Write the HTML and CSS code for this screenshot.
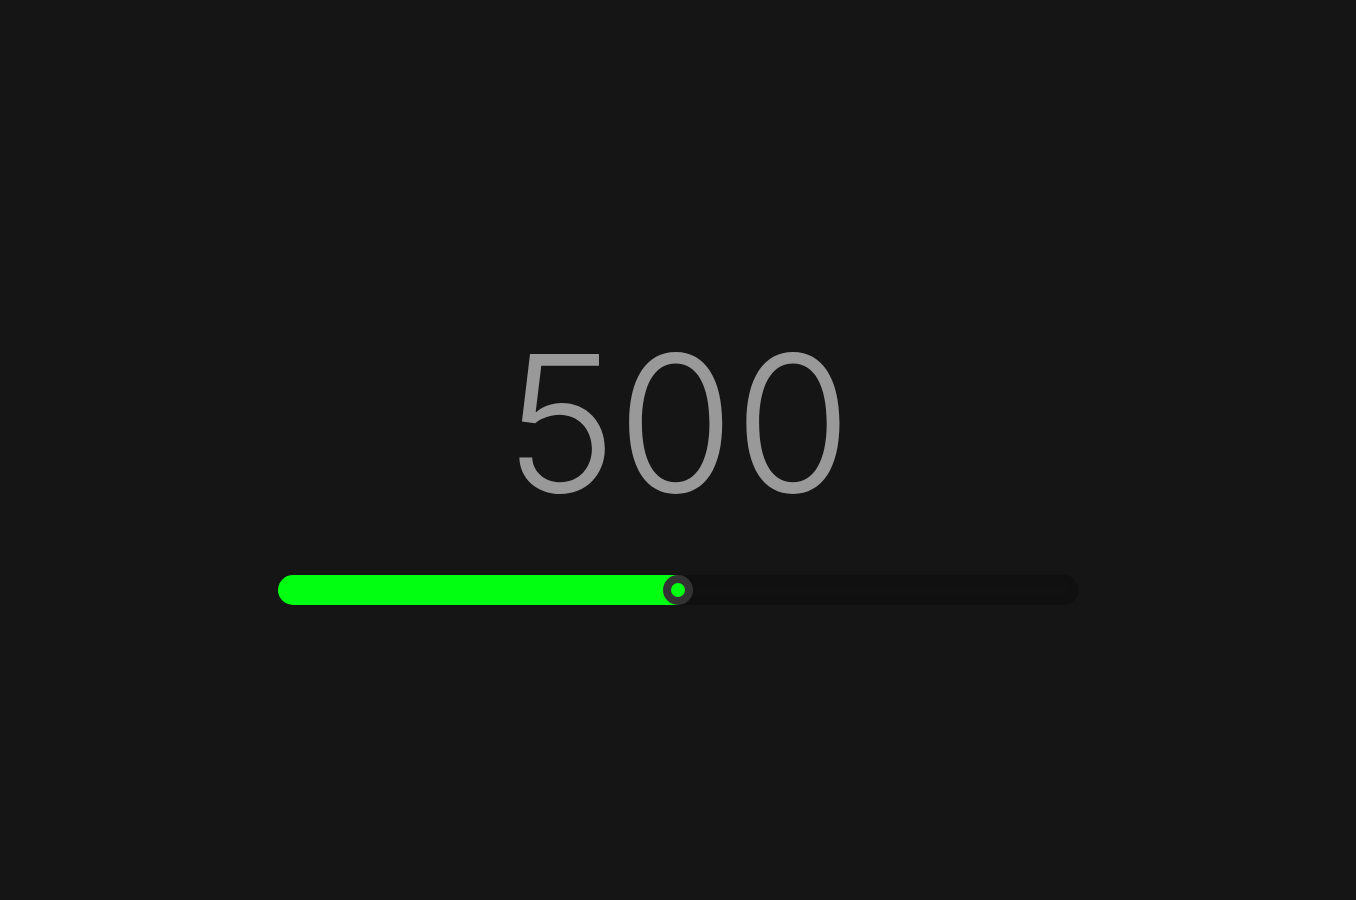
FILE: index.html
```html
<!DOCTYPE html>
<html>
<head>
<meta charset="utf-8">
<link rel="stylesheet" href="styles.css">
</head>
<body>
<main class="stage">
  <div class="value">500</div>
  <div class="slider">
    <div class="fill" style="width: 50%"></div>
    <div class="thumb" style="left: 50%"><span class="dot"></span></div>
  </div>
</main>
</body>
</html>
```
FILE: styles.css
```css
html, body {
  margin: 0;
  padding: 0;
  height: 100%;
  background: #151515;
}
.stage {
  height: 900px;
  display: flex;
  flex-direction: column;
  align-items: center;
  justify-content: flex-start;
}
.value {
  margin-top: 318px;
  font-family: Inter, "Liberation Sans", sans-serif;
  font-weight: 300;
  font-size: 190px;
  line-height: 210px;
  color: #999999;
}
.slider {
  position: relative;
  margin-top: 47px;
  width: 800px;
  height: 30px;
  border-radius: 15px;
  background: #111111;
  box-shadow: inset 0 0 6px 3px #101010;
}
.fill {
  height: 30px;
  border-radius: 15px 0 0 15px;
  background: #00ff11;
}
.thumb {
  position: absolute;
  top: 0;
  width: 30px;
  height: 30px;
  margin-left: -15px;
  border-radius: 50%;
  background: #333333;
  display: flex;
  align-items: center;
  justify-content: center;
}
.dot {
  width: 14px;
  height: 14px;
  border-radius: 50%;
  background: #00ff11;
}
```
